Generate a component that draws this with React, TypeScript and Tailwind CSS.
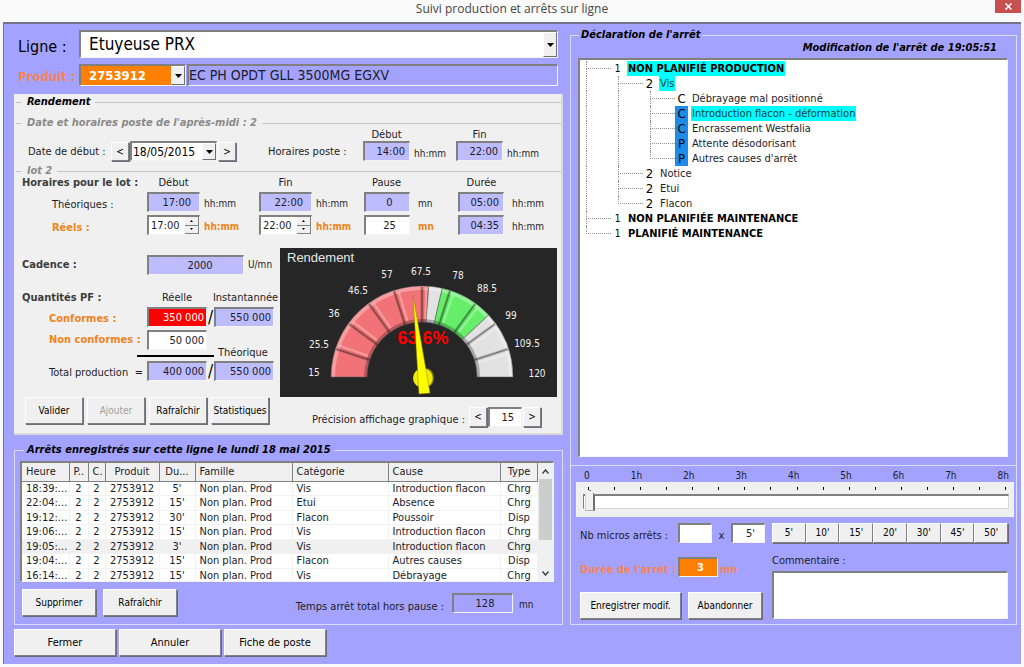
import React, { useState } from "react";

// Shared bevel styles
const raised =
  "bg-[#f0f0f0] border border-t-white border-l-white border-b-[#808088] border-r-[#808088] shadow-[1px_1px_0_#6c6c78] text-black";
const sunken = "border-t-2 border-l-2 border-b border-r border-t-[#808080] border-l-[#808080] border-b-[#f4f4f4] border-r-[#f4f4f4]";

type FieldProps = {
  label: string;
  value: string;
  className: string;
};

const Field: React.FC<FieldProps> = ({ label, value, className }) => {
  const [text, setText] = useState(value);
  return (
    <input
      type="text"
      aria-label={label}
      value={text}
      onChange={(e) => setText(e.target.value)}
      className={`h-5 min-w-0 rounded-none text-[11px] outline-none ${sunken} ${className}`}
    />
  );
};

const TimeSpinner: React.FC<{ label: string; value: string }> = ({ label, value }) => {
  return (
    <div className={`flex h-5 w-[53px] bg-white ${sunken}`}>
      <input type="text" aria-label={label} defaultValue={value} className="w-[36px] bg-white pl-[2px] text-[11px] outline-none" />
      <div className="flex flex-1 flex-col">
        <button type="button" aria-label={`${label} plus`} className="flex flex-1 items-center justify-center border-r border-b border-[#808080] bg-[#f0f0f0]">
          <svg width="3" height="2" viewBox="0 0 3 2">
            <path d="M0 2 L1.5 0 L3 2 Z" fill="#000" />
          </svg>
        </button>
        <button type="button" aria-label={`${label} moins`} className="flex flex-1 items-center justify-center border-r border-b border-[#808080] bg-[#f0f0f0]">
          <svg width="3" height="2" viewBox="0 0 3 2">
            <path d="M0 0 L1.5 2 L3 0 Z" fill="#000" />
          </svg>
        </button>
      </div>
    </div>
  );
};

type ComboProps = {
  id: string;
  label: string;
  options: string[];
  className: string;
  selectClassName: string;
};

const Combo: React.FC<ComboProps> = ({ id, label, options, className, selectClassName }) => (
  <div className={`relative ${sunken} ${className}`}>
    <select id={id} aria-label={label} className={`h-full w-full appearance-none leading-normal outline-none ${selectClassName}`}>
      {options.map((o) => (
        <option key={o}>{o}</option>
      ))}
    </select>
    <span className="pointer-events-none absolute inset-y-0 right-0 flex w-[14px] items-center justify-center border border-t-white border-l-white border-b-[#707070] border-r-[#707070] bg-[#f0f0f0]">
      <svg width="7" height="4" viewBox="0 0 7 4">
        <path d="M0 0 H7 L3.5 4 Z" fill="#000" />
      </svg>
    </span>
  </div>
);

const GroupTitle: React.FC<{ title: string; className: string }> = ({ title, className }) => (
  <div className="flex h-3 items-center gap-[5px]">
    <span className="h-px w-[6px] bg-[#c4c4c4]" />
    <h2 className={`text-[11px] leading-3 font-bold italic ${className}`}>{title}</h2>
    <span className="h-px flex-1 bg-[#c4c4c4]" />
  </div>
);

const Unit: React.FC<{ text: string; strong?: boolean }> = ({ text, strong }) => (
  <span className={strong ? "pt-1 pl-1 text-[10px] font-bold text-[#ef8420]" : "pt-1 pl-1 text-[10px]"}>{text}</span>
);

// ---- Gauge ----

const CX = 142;
const CY = 129;
const MIN = 15;
const MAX = 120;

const polar = (value: number, r: number) => {
  const a = Math.PI * (1 - (value - MIN) / (MAX - MIN));
  return [CX + r * Math.cos(a), CY - r * Math.sin(a)];
};

const band = (from: number, to: number, outer: number, inner: number) => {
  const [x1, y1] = polar(from, outer);
  const [x2, y2] = polar(to, outer);
  const [x3, y3] = polar(to, inner);
  const [x4, y4] = polar(from, inner);
  return `M${x1} ${y1} A${outer} ${outer} 0 0 1 ${x2} ${y2} L${x3} ${y3} A${inner} ${inner} 0 0 0 ${x4} ${y4} Z`;
};

const zones = [
  { from: 15, to: 70, color: "#f27377" },
  { from: 70, to: 75, color: "#e2e2e2" },
  { from: 75, to: 95, color: "#66ee6a" },
  { from: 95, to: 120, color: "#e2e2e2" },
];

const dividers = [25.5, 36, 46.5, 57, 67.5, 78, 88.5, 99, 109.5];

const gaugeLabels = [
  { text: "15", x: 34, y: 128 },
  { text: "25.5", x: 39, y: 100 },
  { text: "36", x: 54, y: 69 },
  { text: "46.5", x: 78, y: 46 },
  { text: "57", x: 107, y: 30 },
  { text: "67.5", x: 141, y: 27 },
  { text: "78", x: 178, y: 31 },
  { text: "88.5", x: 207, y: 44 },
  { text: "99", x: 231, y: 71 },
  { text: "109.5", x: 247, y: 99 },
  { text: "120", x: 257, y: 129 },
];

const Gauge: React.FC = () => (
  <svg viewBox="0 0 277 149" className="h-[149px] w-full bg-[#262626]" role="img" aria-label="Rendement 63,6%">
    <text x="7" y="14" fontSize="13" fill="#e8e8e8" className="font-[family-name:'Liberation_Sans',sans-serif]">
      Rendement
    </text>
    {zones.map((z) => (
      <g key={z.from}>
        <path d={band(z.from, z.to, 91, 55)} fill={z.color} />
        <path d={band(z.from, z.to, 91, 87)} fill="#fff" opacity="0.3" />
        <path d={band(z.from, z.to, 58, 55)} fill="#000" opacity="0.25" />
        <path d={band(z.from, z.to, 91, 55)} fill="none" stroke="#555" strokeWidth="1" opacity="0.5" />
      </g>
    ))}
    {dividers.map((d) => {
      const [x1, y1] = polar(d, 90);
      const [x2, y2] = polar(d, 55);
      const [x3, y3] = polar(d + 1.6, 88);
      const [x4, y4] = polar(d + 2, 58);
      return (
        <g key={d}>
          <line x1={x3} y1={y3} x2={x4} y2={y4} stroke="#fff" strokeWidth="2" opacity="0.3" />
          <line x1={x1} y1={y1} x2={x2} y2={y2} stroke="#000" strokeWidth="3" opacity="0.2" />
          <line x1={x1} y1={y1} x2={x2} y2={y2} stroke="#222" strokeWidth="1" opacity="0.5" />
        </g>
      );
    })}
    {gaugeLabels.map((l) => (
      <text key={l.text} x={l.x} y={l.y} fontSize="10" textAnchor="middle" fill="#f0f0f0">
        {l.text}
      </text>
    ))}
    <text x="143" y="96" fontSize="18" fontWeight="bold" textAnchor="middle" fill="#ff0000" className="font-[family-name:'Liberation_Sans',sans-serif]">
      63,6%
    </text>
    <circle cx="143" cy="130" r="10" fill="#f2ea00" />
    <path d="M148 121 A10 10 0 0 1 149 138" fill="none" stroke="#a8a000" strokeWidth="1.5" opacity="0.6" />
    <path d="M133 47 L150 145 L139 146 Z" fill="#ffff00" stroke="#8a8400" strokeWidth="0.5" />
  </svg>
);

// ---- Stops table ----

const columns = [
  { title: "Heure", width: "w-[47px]", align: "text-left" },
  { title: "P..", width: "w-[19px]", align: "text-center" },
  { title: "C.", width: "w-[17px]", align: "text-center" },
  { title: "Produit", width: "w-[54px]", align: "text-center" },
  { title: "Du...", width: "w-[36px]", align: "text-center" },
  { title: "Famille", width: "w-[97px]", align: "text-left" },
  { title: "Catégorie", width: "w-[96px]", align: "text-left" },
  { title: "Cause", width: "", align: "text-left" },
  { title: "Type", width: "w-[37px]", align: "text-center" },
];

const stops = [
  ["18:39:...", "2", "2", "2753912", "5'", "Non plan. Prod", "Vis", "Introduction flacon", "Chrg"],
  ["22:04:...", "2", "2", "2753912", "15'", "Non plan. Prod", "Etui", "Absence", "Chrg"],
  ["19:12:...", "2", "2", "2753912", "30'", "Non plan. Prod", "Flacon", "Poussoir", "Disp"],
  ["19:06:...", "2", "2", "2753912", "15'", "Non plan. Prod", "Vis", "Introduction flacon", "Chrg"],
  ["19:05:...", "2", "2", "2753912", "3'", "Non plan. Prod", "Vis", "Introduction flacon", "Chrg"],
  ["19:04:...", "2", "2", "2753912", "15'", "Non plan. Prod", "Flacon", "Autres causes", "Disp"],
  ["16:14:...", "2", "2", "2753912", "15'", "Non plan. Prod", "Vis", "Débrayage", "Chrg"],
];

const StopsTable: React.FC = () => (
  <div className={`flex h-[121px] bg-white ${sunken}`}>
    <div className="min-w-0 flex-1 overflow-hidden">
      <table className="h-[120px] w-full table-fixed border-collapse text-[11px] leading-[13px]">
        <thead>
          <tr className="h-[18px]">
            {columns.map((c) => (
              <th
                key={c.title}
                className={`overflow-hidden border-r border-b border-[#808080] bg-[#f0f0f0] px-1 font-normal whitespace-nowrap ${c.width} ${c.align}`}
              >
                {c.title}
              </th>
            ))}
          </tr>
        </thead>
        <tbody>
          {stops.map((row, i) => (
            <tr key={row[0]} className={i === 4 ? "bg-[#f0f0f0]" : "bg-white"}>
              {row.map((cell, j) => (
                <td key={j} className={`overflow-hidden border-r border-b border-[#f2f2f2] px-1 py-0 whitespace-nowrap ${columns[j].align}`}>
                  {cell}
                </td>
              ))}
            </tr>
          ))}
        </tbody>
      </table>
    </div>
    <div className="flex w-[15px] flex-col items-center bg-[#f0f0f0]">
      <button type="button" aria-label="Défiler vers le haut" className="flex h-4 w-full items-center justify-center">
        <svg width="7" height="5" viewBox="0 0 7 5" fill="none" stroke="#404040" strokeWidth="1.5">
          <path d="M0.5 4.5 L3.5 1 L6.5 4.5" />
        </svg>
      </button>
      <div className="h-[61px] w-[13px] bg-[#cdcdcd]" />
      <div className="flex-1" />
      <button type="button" aria-label="Défiler vers le bas" className="flex h-4 w-full items-center justify-center">
        <svg width="7" height="5" viewBox="0 0 7 5" fill="none" stroke="#404040" strokeWidth="1.5">
          <path d="M0.5 0.5 L3.5 4 L6.5 0.5" />
        </svg>
      </button>
    </div>
  </div>
);

// ---- Tree ----

type Guide = "line" | "tee" | "end";

type Node = {
  guides: Guide[];
  mark: string;
  text: string;
  bold?: boolean;
  selected?: boolean;
  blue?: boolean;
};

const nodes: Node[] = [
  { guides: ["tee"], mark: "1", text: "NON PLANIFIÉ PRODUCTION", bold: true, selected: true },
  { guides: ["line", "tee"], mark: "2", text: "Vis", selected: true },
  { guides: ["line", "line", "tee"], mark: "C", text: "Débrayage mal positionné" },
  { guides: ["line", "line", "tee"], mark: "C", text: "Introduction flacon - déformation", selected: true, blue: true },
  { guides: ["line", "line", "tee"], mark: "C", text: "Encrassement Westfalia", blue: true },
  { guides: ["line", "line", "tee"], mark: "P", text: "Attente désodorisant", blue: true },
  { guides: ["line", "line", "end"], mark: "P", text: "Autres causes d'arrêt", blue: true },
  { guides: ["line", "tee"], mark: "2", text: "Notice" },
  { guides: ["line", "tee"], mark: "2", text: "Etui" },
  { guides: ["line", "end"], mark: "2", text: "Flacon" },
  { guides: ["tee"], mark: "1", text: "NON PLANIFIÉE MAINTENANCE", bold: true },
  { guides: ["end"], mark: "1", text: "PLANIFIÉ MAINTENANCE", bold: true },
];

const StopTree: React.FC = () => (
  <ul className={`flex-1 bg-white pt-px pl-[6px] ${sunken}`}>
    {nodes.map((n) => (
      <li key={n.text} className="flex h-[15px]">
        {n.guides.map((g, i) =>
          g === "line" ? (
            <span key={i} className="w-8 border-l border-dotted border-[#909090]" />
          ) : (
            <span key={i} className="flex w-[25px] flex-col">
              <span className="h-2 border-b border-l border-dotted border-[#909090]" />
              {g === "tee" && <span className="flex-1 border-l border-dotted border-[#909090]" />}
            </span>
          ),
        )}
        <span
          className={`w-[13px] text-center leading-[15px] text-black ${n.mark === "1" ? "text-[10px]" : "text-[13px]"} ${n.blue ? "bg-[#1c8ce8]" : ""}`}
        >
          {n.mark}
        </span>
        <span
          className={`ml-[3px] px-px text-[11px] leading-[15px] whitespace-nowrap ${n.bold ? "font-bold text-black" : ""} ${n.selected ? "bg-[#00ffff] text-[#003c3c]" : ""}`}
        >
          {n.text}
        </span>
      </li>
    ))}
  </ul>
);

const hours = ["0", "1h", "2h", "3h", "4h", "5h", "6h", "7h", "8h"];
const minutes = ["5'", "10'", "15'", "20'", "30'", "45'", "50'"];

const App: React.FC = () => {
  const [minutesStopped, setMinutesStopped] = useState(3);

  return (
    <div className="flex min-h-screen flex-col bg-[#fafafa] pr-[3px] pb-[3px] pl-[3px] font-[family-name:'DejaVu_Sans_Condensed','DejaVu_Sans',sans-serif] text-[11px] leading-[14px] text-[#1c1c28]">
      {/* Title bar */}
      <header className="relative flex h-[22px] items-start justify-center pt-px">
        <h1 className="text-[12px] leading-4 text-[#444] font-[family-name:'Open_Sans',sans-serif]">Suivi production et arrêts sur ligne</h1>
        <button type="button" aria-label="Fermer la fenêtre" className="absolute top-0 right-0 flex h-[13px] w-[26px] items-center justify-center bg-[#c75050]">
          <svg width="7" height="7" viewBox="0 0 7 7" stroke="#fff" strokeWidth="1.5">
            <path d="M0.5 0.5 L6.5 6.5 M6.5 0.5 L0.5 6.5" />
          </svg>
        </button>
      </header>

      <main className="flex flex-1 flex-col border-t-2 border-l border-[#74748c] bg-[#a3a3ff] pr-1 pb-2 pl-[10px]">
        <div className="grid flex-1 grid-cols-[549fr_447fr] gap-[7px]">
          {/* Left column */}
          <div className="flex min-w-0 flex-col pt-[6px]">
            <div className="flex h-7 items-center pr-[5px]">
              <label htmlFor="ligne" className="w-[65px] pt-[6px] pl-1 text-[16px] text-black">
                Ligne :
              </label>
              <Combo id="ligne" label="Ligne" options={["Etuyeuse PRX"]} className="h-7 flex-1 bg-white" selectClassName="bg-white pl-2 text-[17px] text-black" />
            </div>
            <div className="mt-[6px] flex h-[22px] items-center pr-[5px]">
              <label htmlFor="produit" className="w-[65px] pt-1 pl-1 text-[13px] font-bold whitespace-nowrap text-[#f58452]">
                Produit :
              </label>
              <Combo id="produit" label="Produit" options={["2753912"]} className="h-[22px] w-[107px] bg-[#ff8000]" selectClassName="bg-[#ff8000] pl-2 text-[13px] font-bold text-white" />
              <input
                type="text"
                aria-label="Désignation"
                readOnly
                value="EC PH OPDT GLL 3500MG EGXV"
                className={`ml-px h-[22px] min-w-0 flex-1 bg-[#a3a3ff] pb-[2px] text-[14px] outline-none ${sunken}`}
              />
            </div>

            {/* Rendement */}
            <section className="mt-2 flex h-[341px] flex-col border-r-2 border-b-2 border-[#d8d8d8] bg-[#f0f0f0] pt-[2px] pl-[2px]">
              <GroupTitle title="Rendement" className="text-black" />
              <div className="h-[9px]" />
              <GroupTitle title="Date et horaires poste de l'après-midi : 2" className="text-[#8a8a8a]" />
              <div className="flex h-8 items-end">
                <span className="w-[95px] pb-[2px] pl-3 whitespace-nowrap">Date de début :</span>
                <button type="button" aria-label="Jour précédent" className={`h-[19px] w-[18px] text-[10px] ${raised}`}>
                  &lt;
                </button>
                <Combo id="jour" label="Date de début" options={["18/05/2015"]} className="ml-px h-5 w-[87px] bg-white" selectClassName="bg-white pl-px text-[12px] text-black" />
                <button type="button" aria-label="Jour suivant" className={`ml-px h-[19px] w-[18px] text-[10px] ${raised}`}>
                  &gt;
                </button>
                <span className="ml-8 w-[95px] pb-[2px] whitespace-nowrap">Horaires poste :</span>
                <div className="flex w-[47px] flex-col">
                  <span className="text-center leading-3">Début</span>
                  <Field label="Début du poste" value="14:00" className="w-full bg-[#bcbcff] pr-1 text-right" />
                </div>
                <Unit text="hh:mm" />
                <div className="ml-auto flex w-[47px] flex-col">
                  <span className="text-center leading-3">Fin</span>
                  <Field label="Fin du poste" value="22:00" className="w-full bg-[#bcbcff] pr-1 text-right" />
                </div>
                <span className="w-[58px] pl-1 text-[10px]">hh:mm</span>
              </div>
              <div className="h-1" />
              <GroupTitle title="lot 2" className="text-[#8a8a8a]" />

              <div className="grid grid-cols-[125px_112px_105px_94px_1fr] gap-y-[3px] pl-[6px]">
                <strong className="leading-3 text-[#3c3c3c] whitespace-nowrap">Horaires pour le lot :</strong>
                <span className="w-[53px] text-center leading-3">Début</span>
                <span className="w-[53px] text-center leading-3">Fin</span>
                <span className="w-[45px] text-center leading-3">Pause</span>
                <span className="w-[47px] text-center leading-3">Durée</span>

                <span className="pt-[6px] pl-[30px]">Théoriques :</span>
                <div className="flex items-center">
                  <Field label="Début théorique" value="17:00" className="w-[53px] bg-[#bcbcff] pr-[8px] text-right" />
                  <Unit text="hh:mm" />
                </div>
                <div className="flex items-center">
                  <Field label="Fin théorique" value="22:00" className="w-[53px] bg-[#bcbcff] pr-[8px] text-right" />
                  <Unit text="hh:mm" />
                </div>
                <div className="flex items-center">
                  <Field label="Pause théorique" value="0" className="w-[46px] bg-[#bcbcff] pl-1 text-center" />
                  <span className="pt-1 pl-2 text-[10px]">mn</span>
                </div>
                <div className="flex items-center">
                  <Field label="Durée théorique" value="05:00" className="w-[46px] bg-[#bcbcff] pr-1 text-right" />
                  <span className="pt-1 pl-2 text-[10px]">hh:mm</span>
                </div>

                <strong className="pt-[6px] pl-[30px] text-[#ef8420]">Réels :</strong>
                <div className="flex items-center">
                  <TimeSpinner label="Début réel" value="17:00" />
                  <Unit text="hh:mm" strong />
                </div>
                <div className="flex items-center">
                  <TimeSpinner label="Fin réelle" value="22:00" />
                  <Unit text="hh:mm" strong />
                </div>
                <div className="flex items-center">
                  <Field label="Pause réelle" value="25" className="w-[46px] bg-white pl-1 text-center" />
                  <span className="pt-1 pl-2 text-[10px] font-bold text-[#ef8420]">mn</span>
                </div>
                <div className="flex items-center">
                  <Field label="Durée réelle" value="04:35" className="w-[46px] bg-[#bcbcff] pr-1 text-right" />
                  <span className="pt-1 pl-2 text-[10px]">hh:mm</span>
                </div>
              </div>

              <div className="mt-[13px] flex flex-1">
                {/* Quantities */}
                <div className="flex w-[264px] flex-col pt-[7px] pl-[6px]">
                  <div className="flex h-5 items-center">
                    <strong className="w-[125px] text-[#3c3c3c]">Cadence :</strong>
                    <Field label="Cadence" value="2000" className="w-[97px] bg-[#bcbcff] pl-2 text-center" />
                    <span className="pl-1 text-[10px]">U/mn</span>
                  </div>
                  <div className="mt-4 flex items-end">
                    <strong className="w-[125px] text-[#3c3c3c]">Quantités PF :</strong>
                    <span className="w-[60px] text-center">Réelle</span>
                    <span className="flex-1 pl-1 text-center">Instantannée</span>
                  </div>
                  <div className="mt-[2px] flex items-center">
                    <strong className="w-[125px] pt-1 pl-[27px] text-[#ef8420]">Conformes :</strong>
                    <Field label="Conformes réelle" value="350 000" className="w-[60px] bg-[#ff0000] pr-[2px] text-right text-white" />
                    <span className="w-[7px] text-center text-[17px] text-black">/</span>
                    <Field label="Conformes instantannée" value="550 000" className="w-[60px] bg-[#bcbcff] pr-[2px] text-right" />
                  </div>
                  <div className="mt-[3px] flex items-center">
                    <strong className="w-[125px] pl-[27px] whitespace-nowrap text-[#ef8420]">Non conformes :</strong>
                    <Field label="Non conformes" value="50 000" className="w-[60px] bg-white pr-[2px] text-right" />
                  </div>
                  <div className="flex h-[11px] items-center">
                    <span className="ml-[115px] h-[2px] w-[77px] bg-black" />
                    <span className="pb-[6px] pl-1">Théorique</span>
                  </div>
                  <div className="flex items-center">
                    <span className="flex w-[125px] justify-between pt-1 pr-1 pl-[27px] whitespace-nowrap">
                      Total production <span>=</span>
                    </span>
                    <Field label="Total production" value="400 000" className="w-[60px] bg-[#bcbcff] pr-[2px] text-right" />
                    <span className="w-[7px] text-center text-[17px] text-black">/</span>
                    <Field label="Total théorique" value="550 000" className="w-[60px] bg-[#bcbcff] pr-[2px] text-right" />
                  </div>
                  <div className="mt-4 flex gap-1 pl-[3px] text-[10px]">
                    <button type="button" className={`h-[27px] w-[58px] ${raised}`}>
                      Valider
                    </button>
                    <button type="button" disabled className={`h-[27px] w-[58px] ${raised}`}>
                      <span className="text-[#a0a0a0]">Ajouter</span>
                    </button>
                    <button type="button" className={`h-[27px] w-[58px] ${raised}`}>
                      Rafraîchir
                    </button>
                    <button type="button" className={`h-[27px] w-[58px] ${raised}`}>
                      Statistiques
                    </button>
                  </div>
                </div>

                {/* Gauge */}
                <div className="flex min-w-0 flex-1 flex-col pr-1">
                  <Gauge />
                  <div className="mt-[10px] flex items-center justify-end pr-4">
                    <label htmlFor="precision" className="pt-[6px] pr-1 whitespace-nowrap">
                      Précision affichage graphique :
                    </label>
                    <button type="button" aria-label="Diminuer" className={`h-5 w-[18px] text-[10px] ${raised}`}>
                      &lt;
                    </button>
                    <input id="precision" type="text" defaultValue="15" className={`ml-px h-5 w-[34px] bg-white pr-[7px] text-right text-[11px] outline-none ${sunken}`} />
                    <button type="button" aria-label="Augmenter" className={`ml-px h-5 w-[18px] text-[10px] ${raised}`}>
                      &gt;
                    </button>
                  </div>
                </div>
              </div>
            </section>

            {/* Recorded stops */}
            <fieldset className="mt-2 flex flex-1 flex-col border border-[#dadaf0] pr-2 pb-2 pl-[5px]">
              <legend className="ml-1 px-[3px] text-[11px] leading-[14px] font-bold text-black italic">Arrêts enregistrés sur cette ligne le lundi 18 mai 2015</legend>
              <div className="mt-1">
                <StopsTable />
              </div>
              <div className="mt-[7px] flex items-center pl-[2px]">
                <button type="button" className={`h-[27px] w-[74px] text-[10px] ${raised}`}>
                  Supprimer
                </button>
                <button type="button" className={`ml-[7px] h-[27px] w-[74px] text-[10px] ${raised}`}>
                  Rafraîchir
                </button>
                <span className="ml-auto pt-2 pr-2">Temps arrêt total hors pause :</span>
                <Field label="Temps arrêt total hors pause" value="128" className="w-[61px] bg-[#a3a3ff] pl-1 text-center" />
                <span className="w-[41px] pt-1 pl-[6px] text-[10px]">mn</span>
              </div>
            </fieldset>
          </div>

          {/* Right column */}
          <fieldset className="mt-1 flex min-w-0 flex-col border border-[#dadaf0]">
            <legend className="ml-2 px-[2px] text-[11px] leading-[14px] font-bold text-black italic">Déclaration de l'arrêt</legend>
            <p className="pr-[19px] text-right leading-3 font-bold text-black italic">Modification de l'arrêt de 19:05:51</p>
            <div className="mr-2 ml-[7px] mt-1 flex h-[399px] flex-col">
              <StopTree />
            </div>

            <div className="mt-2 border-t border-[#dadaf0] pt-[3px] pr-[2px] pl-[5px]">
              <div className="flex justify-between pr-[5px] pl-2 text-[10px] leading-[13px]">
                {hours.map((h) => (
                  <span key={h}>{h}</span>
                ))}
              </div>
              <div className="flex h-[35px] flex-col bg-[#f0f0f0] pt-[5px] pr-[5px] pl-[7px]">
                <div className="flex h-[3px] justify-between pr-[3px] pl-[5px]">
                  {Array.from({ length: 17 }, (_, i) => (
                    <span key={i} className="w-px bg-black" />
                  ))}
                </div>
                <input
                  type="range"
                  aria-label="Durée de l'arrêt en minutes"
                  min={3}
                  max={480}
                  value={minutesStopped}
                  onChange={(e) => setMinutesStopped(Number(e.target.value))}
                  className="h-[22px] w-full appearance-none bg-transparent outline-none [&::-webkit-slider-runnable-track]:h-[15px] [&::-webkit-slider-runnable-track]:border [&::-webkit-slider-runnable-track]:border-t-2 [&::-webkit-slider-runnable-track]:border-[#d8d8d8] [&::-webkit-slider-runnable-track]:border-t-[#808080] [&::-webkit-slider-runnable-track]:border-l-[#808080] [&::-webkit-slider-runnable-track]:bg-white [&::-webkit-slider-thumb]:-mt-[6px] [&::-webkit-slider-thumb]:ml-px [&::-webkit-slider-thumb]:h-[21px] [&::-webkit-slider-thumb]:w-[10px] [&::-webkit-slider-thumb]:appearance-none [&::-webkit-slider-thumb]:border [&::-webkit-slider-thumb]:border-r-2 [&::-webkit-slider-thumb]:border-[#707070] [&::-webkit-slider-thumb]:border-l-[#d0d0d0] [&::-webkit-slider-thumb]:bg-[#f0f0f0] [&::-webkit-slider-thumb]:[clip-path:polygon(50%_0,100%_25%,100%_100%,0_100%,0_25%)]"
                />
              </div>
            </div>

            <div className="mt-[6px] flex gap-[7px] pr-2 pl-[9px]">
              <div className="flex w-[185px] flex-col">
                <div className="flex items-center">
                  <label htmlFor="micros" className="w-[98px] pt-[6px] whitespace-nowrap">
                    Nb micros arrêts :
                  </label>
                  <input id="micros" type="text" className={`h-5 w-[34px] bg-white text-[11px] outline-none ${sunken}`} />
                  <span className="flex-1 pt-[6px] text-center">x</span>
                  <Field label="Durée d'un micro arrêt" value="5'" className="w-[34px] bg-white pr-[9px] text-right" />
                </div>
                <div className="mt-[14px] flex items-center">
                  <label htmlFor="duree" className="w-[98px] pt-[6px] font-bold whitespace-nowrap text-[#f58452]">
                    Durée de l'arrêt :
                  </label>
                  <input
                    id="duree"
                    type="text"
                    value={minutesStopped}
                    onChange={(e) => setMinutesStopped(Number(e.target.value) || 0)}
                    className={`h-5 w-10 bg-[#ff8000] pl-1 text-center text-[11px] font-bold text-white outline-none ${sunken}`}
                  />
                  <span className="pt-[6px] pl-[2px] font-bold text-[#f58452]">mn</span>
                </div>
                <div className="mt-[15px] flex gap-[7px] text-[10px]">
                  <button type="button" className={`h-[27px] w-[101px] whitespace-nowrap ${raised}`}>
                    Enregistrer modif.
                  </button>
                  <button type="button" className={`h-[27px] w-[74px] ${raised}`}>
                    Abandonner
                  </button>
                </div>
              </div>
              <div className="flex min-w-0 flex-1 flex-col">
                <div className="flex text-[10px]">
                  {minutes.map((m) => (
                    <button key={m} type="button" className={`h-5 flex-1 ${raised}`}>
                      {m}
                    </button>
                  ))}
                </div>
                <label htmlFor="commentaire" className="mt-[11px]">
                  Commentaire :
                </label>
                <textarea id="commentaire" className={`mt-[3px] h-12 w-full resize-none bg-white outline-none ${sunken}`} />
              </div>
            </div>
          </fieldset>
        </div>

        {/* Bottom actions */}
        <div className="mt-1 flex gap-[3px]">
          <button type="button" className={`h-[27px] w-[102px] ${raised}`}>
            Fermer
          </button>
          <button type="button" className={`h-[27px] w-[102px] ${raised}`}>
            Annuler
          </button>
          <button type="button" className={`h-[27px] w-[102px] ${raised}`}>
            Fiche de poste
          </button>
        </div>
      </main>
    </div>
  );
};

export default App;
